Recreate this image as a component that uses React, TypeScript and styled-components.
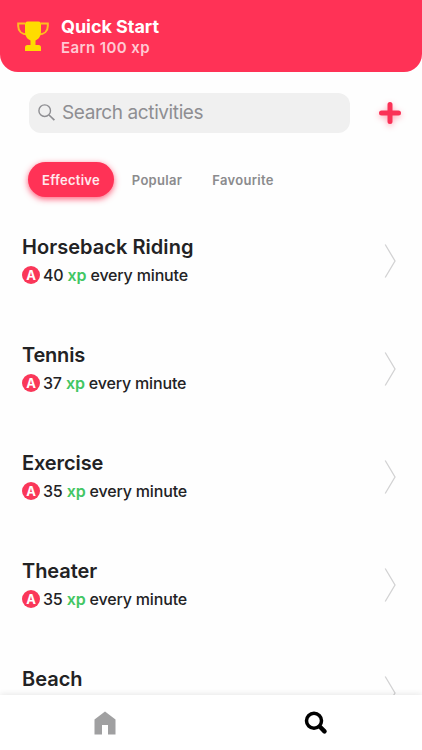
import React from "react";
import styled, { createGlobalStyle } from "styled-components";

const GlobalStyle = createGlobalStyle`
  * { box-sizing: border-box; }
  html, body { margin: 0; background: #fff; overflow: hidden; }
  body { font-family: Inter, "Liberation Sans", sans-serif; color: #222224; }
  button { font: inherit; border: 0; padding: 0; background: none; }
`;

const Screen = styled.div`
  width: 100%;
  height: 100vh;
  display: flex;
  flex-direction: column;
  overflow: hidden;
  background: #fefefe;
`;

const Banner = styled.header`
  flex: 0 0 72px;
  display: flex;
  align-items: flex-start;
  padding: 17px 0 0 17px;
  gap: 12px;
  color: #fff;
  background: #ff3256;
  border-radius: 0 0 18px 18px;
`;

const Trophy = styled.svg`
  width: 32px;
  height: 36px;
  flex: none;
`;

const BannerTitle = styled.div`
  font-size: 18px;
  font-weight: 700;
  line-height: 20px;
  letter-spacing: -0.05px;
`;

const BannerNote = styled.div`
  margin-top: 1px;
  font-size: 15px;
  font-weight: 600;
  line-height: 20px;
  letter-spacing: 0.4px;
  color: #ffc8d2;
`;

const SearchRow = styled.div`
  flex: none;
  display: flex;
  align-items: center;
  margin-top: 21px;
  padding: 0 20px 0 29px;
  justify-content: space-between;
`;

const SearchBox = styled.label`
  width: 321px;
  height: 40px;
  display: flex;
  align-items: center;
  gap: 7px;
  padding-left: 9px;
  background: #f0f0f0;
  border-radius: 12px;
  svg { margin-top: -2px; }
`;

const SearchInput = styled.input`
  flex: 1;
  min-width: 0;
  height: 38px;
  margin-top: -2px;
  padding: 0;
  border: 0;
  outline: 0;
  background: none;
  font: 400 19px Inter, sans-serif;
  letter-spacing: -0.4px;
  &::placeholder { color: #8e8e92; opacity: 1; }
`;

const AddButton = styled.button`
  width: 24px;
  height: 24px;
  svg {
    display: block;
    overflow: visible;
    filter: drop-shadow(0 2px 3px rgba(255, 50, 86, 0.45));
  }
`;

const Tabs = styled.nav`
  flex: none;
  display: flex;
  align-items: center;
  margin: 29px 0 0 28px;
  height: 35px;
`;

const Tab = styled.button<{ $active?: boolean }>`
  width: 86px;
  height: 35px;
  font-size: 13px;
  font-weight: 600;
  letter-spacing: 0.28px;
  white-space: nowrap;
  border-radius: 18px;
  color: ${(p) => (p.$active ? "#ffe9ed" : "#8b8b8d")};
  background: ${(p) => (p.$active ? "#ff3256" : "transparent")};
  box-shadow: ${(p) => (p.$active ? "0 2px 6px rgba(255, 50, 86, 0.8)" : "none")};
`;

const List = styled.main`
  flex: 1;
  min-height: 0;
  overflow: hidden;
  margin-top: 10px;
`;

const Row = styled.section`
  height: 108px;
  display: flex;
  align-items: center;
  justify-content: space-between;
  padding: 0 26px 0 22px;
`;

const Info = styled.div`
  display: flex;
  flex-direction: column;
`;

const RowTitle = styled.h2<{ $spacing?: number }>`
  margin: 0;
  font-size: 20px;
  font-weight: 600;
  line-height: 28px;
  letter-spacing: ${(p) => p.$spacing ?? 0}px;
`;

const Rate = styled.div`
  display: flex;
  align-items: center;
  height: 28px;
  font-size: 16px;
  font-weight: 550;
  letter-spacing: -0.17px;
  white-space: pre;
`;

const Grade = styled.span`
  width: 18px;
  height: 18px;
  margin-right: 3px;
  border-radius: 50%;
  background: #fa3759;
  color: #fff;
  font-size: 13px;
  font-weight: 700;
  line-height: 18px;
  text-align: center;
`;

const Xp = styled.span`
  color: #43c663;
  font-weight: 600;
`;

const TabBar = styled.footer`
  flex: 0 0 55px;
  display: grid;
  grid-template-columns: 1fr 1fr;
  padding-right: 1px;
  background: #fff;
  position: relative;
  box-shadow: 0 -1px 6px rgba(0, 0, 0, 0.09);
`;

const BarButton = styled.button`
  display: flex;
  align-items: center;
  justify-content: center;
`;

const tabs = ["Effective", "Popular", "Favourite"];

const activities: { name: string; xp?: number; spacing?: number }[] = [
  { name: "Horseback Riding", xp: 40, spacing: 0.04 },
  { name: "Tennis", xp: 37, spacing: -0.2 },
  { name: "Exercise", xp: 35, spacing: -0.1 },
  { name: "Theater", xp: 35, spacing: -0.05 },
  { name: "Beach" },
];

export default function App() {
  return (
    <>
      <GlobalStyle />
      <Screen>
        <Banner>
          <Trophy viewBox="0 0 32 36" fill="none">
            <path d="M8 6.500H1.200v2.500c0 5 3.500 8.500 9.300 8.500M24 6.500h6.800v2.500c0 5-3.500 8.500-9.300 8.500" stroke="#ffbd20" strokeWidth="2" />
            <path d="M8 7.500Q8 4.500 10.500 4.500h11Q24 4.500 24 7.500v6.500c0 5-2 8-5.500 9.500v4.500h3q2.500 0 2.500 2.500V34H8v-3.500q0-2.500 2.500-2.500h3v-4.500C10 22 8 19 8 14z" fill="#ffdc00" />
          </Trophy>
          <div>
            <BannerTitle>Quick Start</BannerTitle>
            <BannerNote>Earn 100 xp</BannerNote>
          </div>
        </Banner>
        <SearchRow>
          <SearchBox>
            <svg width="17" height="17" viewBox="0 0 17 17" fill="none" stroke="#8e8e92" strokeWidth="1.400">
              <circle cx="6.700" cy="6.700" r="5.800" />
              <path d="M11 11l5.400 5.200" strokeWidth="1.700" />
            </svg>
            <SearchInput placeholder="Search activities" aria-label="Search activities" />
          </SearchBox>
          <AddButton aria-label="Add activity">
            <svg width="24" height="24" viewBox="0 0 24 24" stroke="#fa3156" strokeWidth="5" strokeLinecap="round">
              <path d="M12 3.500v17M3.500 12h17" />
            </svg>
          </AddButton>
        </SearchRow>
        <Tabs>
          {tabs.map((label, i) => (
            <Tab key={label} $active={i === 0}>
              {label}
            </Tab>
          ))}
        </Tabs>
        <List>
          {activities.map((a) => (
            <Row key={a.name}>
              <Info>
                <RowTitle $spacing={a.spacing}>{a.name}</RowTitle>
                <Rate>
                  {a.xp !== undefined && (
                    <>
                      <Grade>A</Grade>
                      {a.xp} <Xp>xp</Xp> every minute
                    </>
                  )}
                </Rate>
              </Info>
              <svg width="12" height="36" viewBox="0 0 12 36" fill="none" stroke="#d2d2d3" strokeWidth="1.300">
                <path d="M1.200 1.500L11 18L1.200 34.500" />
              </svg>
            </Row>
          ))}
        </List>
        <TabBar>
          <BarButton aria-label="Home">
            <svg width="22" height="24" viewBox="0 0 22 24" fill="#a0a0a1">
              <path d="M11 .5L21.500 8.500V23.500H14V14H8v9.500H.5V8.500z" />
            </svg>
          </BarButton>
          <BarButton aria-label="Search">
            <svg width="24" height="24" viewBox="0 0 24 24" fill="none" stroke="#000">
              <circle cx="10" cy="9.700" r="7.500" strokeWidth="3.500" />
              <path d="M16.200 16l4.300 4.300" strokeWidth="4.500" strokeLinecap="round" />
            </svg>
          </BarButton>
        </TabBar>
      </Screen>
    </>
  );
}
